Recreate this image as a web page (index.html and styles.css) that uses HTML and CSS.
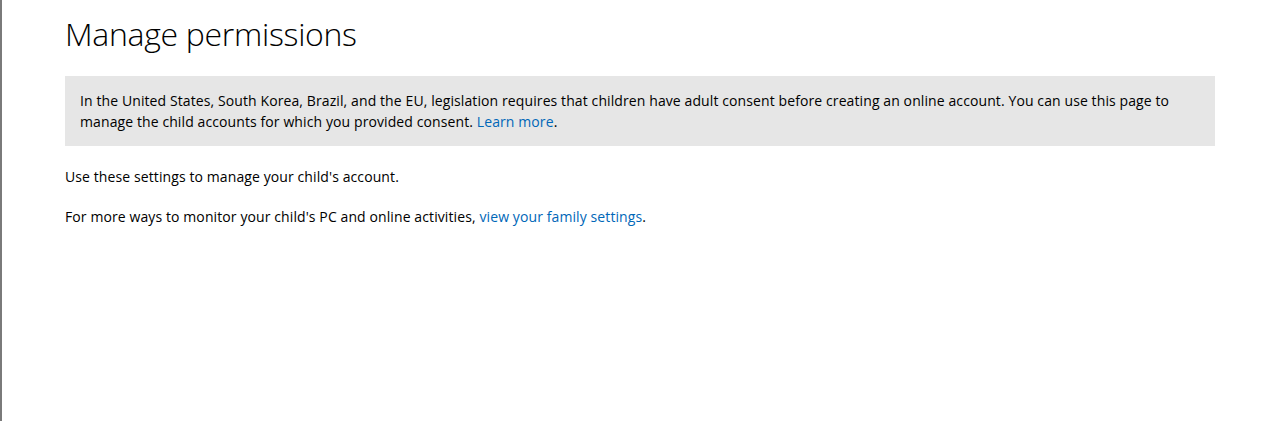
FILE: index.html
```html
<!DOCTYPE html>
<html>
<head>
<meta charset="utf-8">
<link rel="stylesheet" href="styles.css">
</head>
<body>
<div class="frame">
  <main class="content">
    <h1 class="title">Manage permissions</h1>
    <div class="notice">In the United States, South Korea, Brazil, and the EU, legislation requires that children have adult consent before creating an online account. You can use this page to manage the child accounts for which you provided consent. <a href="#" class="link">Learn more</a>.</div>
    <p class="text">Use these settings to manage your child's account.</p>
    <p class="text">For more ways to monitor your child's PC and online activities, <a href="#" class="link">view your family settings</a>.</p>
  </main>
</div>
</body>
</html>
```

FILE: styles.css
```css
html, body {
  margin: 0;
  padding: 0;
  background: #ffffff;
}
.frame {
  border-left: 2px solid #7a7a7a;
  height: 421px;
  box-sizing: border-box;
}
.content {
  padding-left: 63px;
  width: 1150px;
  font-family: "Open Sans", "Noto Sans", sans-serif;
  font-size: 14px;
  letter-spacing: 0.1px;
  color: #000000;
}
.title {
  margin: 0;
  padding-top: 12px;
  font-family: "Open Sans", sans-serif;
  font-weight: 300;
  font-size: 32px;
  line-height: 44px;
  color: #000000;
  letter-spacing: -0.3px;
}
.notice {
  margin-top: 20px;
  background: #e6e6e6;
  padding: 14px 15px 14px 15px;
  line-height: 21px;
}
.text {
  margin: 20px 0 0 0;
  line-height: 21px;
}
.text + .text {
  margin-top: 19px;
}
.link {
  color: #0067b8;
  text-decoration: none;
}
```
